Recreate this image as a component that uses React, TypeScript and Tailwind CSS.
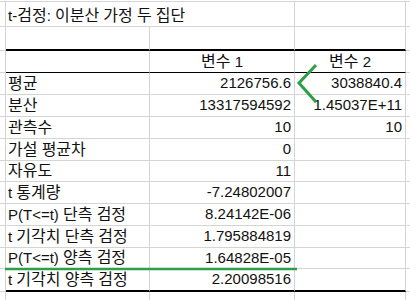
type Line = "grey" | "thick" | "black";

const lineCls: Record<Line, string> = {
  grey: "border-b border-b-[#d4d4d4]",
  thick: "border-b-2 border-b-black",
  black: "border-b border-b-black",
};

const cell = "flex items-center border-r border-r-[#d4d4d4] overflow-visible whitespace-nowrap";

// Hangul runs are set a touch larger than the Latin ones, like Malgun Gothic
function Txt({ s }: { s?: string }) {
  if (!s) return null;
  const parts = s.split(/([\uAC00-\uD7A3]+)/);
  return (
    <span>
      {parts.map((p, i) =>
        /[\uAC00-\uD7A3]/.test(p) ? (
          <span key={i} className="text-[16px]">
            {p}
          </span>
        ) : (
          <span key={i}>{p}</span>
        )
      )}
    </span>
  );
}

function Row({
  h,
  line = "grey",
  a,
  b,
  c,
  merged,
  pad = "",
}: {
  h: string;
  line?: Line;
  a?: string;
  b?: string;
  c?: string;
  merged?: boolean;
  pad?: string;
}) {
  return (
    <div className={`flex ${h}`}>
      <div className="w-[6px] shrink-0 border-r border-r-[#d4d4d4] border-b border-b-[#d4d4d4]" />
      {merged ? (
        <div className={`${cell} w-[289px] shrink-0 pl-[2px] ${pad} ${lineCls[line]}`}>
          <Txt s={a} />
        </div>
      ) : (
        <>
          <div className={`${cell} w-[144px] shrink-0 pl-[2px] ${lineCls[line]}`}>
            <Txt s={a} />
          </div>
          <div className={`${cell} w-[145px] shrink-0 justify-end pr-[3px] ${lineCls[line]}`}>{b}</div>
        </>
      )}
      <div className={`${cell} w-[111px] shrink-0 justify-end pr-[3px] ${lineCls[line]}`}>{c}</div>
      <div className="flex-1 border-b border-b-[#d4d4d4]" />
    </div>
  );
}

const rows: { label: string; v1: string; v2?: string; h: string; line?: Line }[] = [
  { label: "평균", v1: "2126756.6", v2: "3038840.4", h: "h-[22px]" },
  { label: "분산", v1: "13317594592", v2: "1.45037E+11", h: "h-[22px]" },
  { label: "관측수", v1: "10", v2: "10", h: "h-[22px]" },
  { label: "가설 평균차", v1: "0", h: "h-[22px]" },
  { label: "자유도", v1: "11", h: "h-[21px]" },
  { label: "t 통계량", v1: "-7.24802007", h: "h-[22px]" },
  { label: "P(T<=t) 단측 검정", v1: "8.24142E-06", h: "h-[22px]" },
  { label: "t 기각치 단측 검정", v1: "1.795884819", h: "h-[22px]" },
  { label: "P(T<=t) 양측 검정", v1: "1.64828E-05", h: "h-[21px]" },
  { label: "t 기각치 양측 검정", v1: "2.20098516", h: "h-[23px]", line: "thick" },
];

export default function App() {
  return (
    <div className="relative w-[410px] h-[300px] overflow-hidden bg-white text-[15px] text-[#111] font-['Liberation_Sans','Noto_Sans_CJK_KR',sans-serif]">
      <div className="mt-[1px] h-px bg-[#d4d4d4]" />
      <Row h="h-[25px]" merged pad="pt-[4px]" a="t-검정: 이분산 가정 두 집단" />
      <Row h="h-[24px]" line="thick" />
      <div className="flex h-[22px]">
        <div className="w-[6px] shrink-0 border-r border-r-[#d4d4d4] border-b border-b-[#d4d4d4]" />
        <div className={`${cell} w-[144px] shrink-0 ${lineCls.black}`} />
        <div className={`${cell} w-[145px] shrink-0 justify-center ${lineCls.black}`}>
          <Txt s="변수 1" />
        </div>
        <div className={`${cell} w-[111px] shrink-0 justify-center ${lineCls.black}`}>
          <Txt s="변수 2" />
        </div>
        <div className="flex-1 border-b border-b-[#d4d4d4]" />
      </div>
      {rows.map((r) => (
        <Row key={r.label} h={r.h} line={r.line} a={r.label} b={r.v1} c={r.v2} />
      ))}
      <Row h="h-[22px]" />

      {/* green annotations */}
      <svg className="absolute left-0 top-0" width="410" height="300">
        <polyline points="316,65 299,83 316,102" fill="none" stroke="#2e9f47" strokeWidth="3" />
        <line x1="5" y1="269" x2="297" y2="269" stroke="#2e9f47" strokeWidth="2.5" />
      </svg>
    </div>
  );
}
